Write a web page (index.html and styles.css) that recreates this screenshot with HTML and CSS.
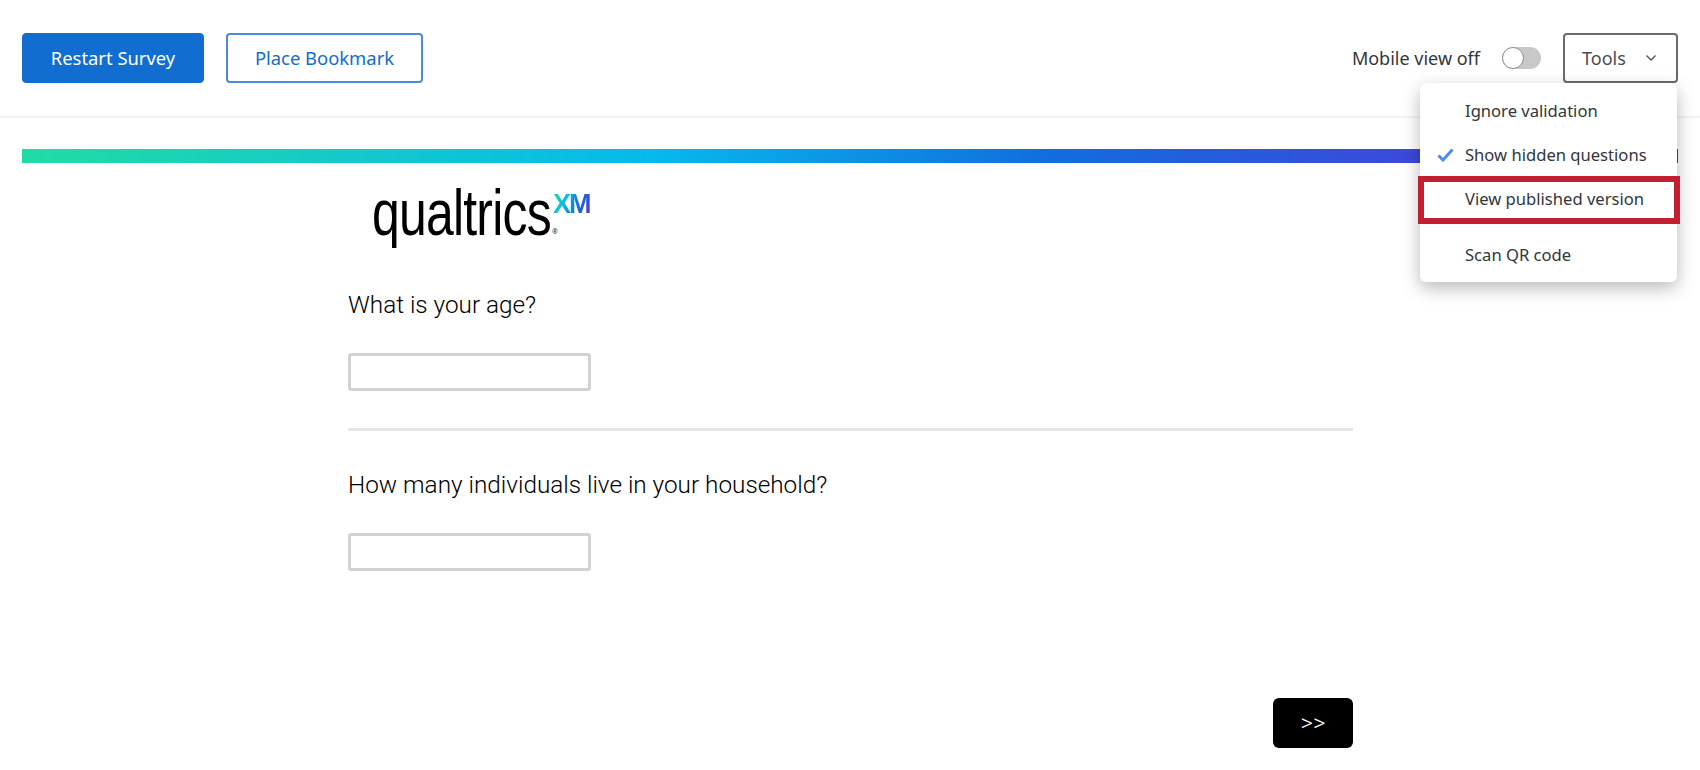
FILE: index.html
```html
<!DOCTYPE html>
<html lang="en">
<head>
<meta charset="utf-8">
<title>Survey preview</title>
<link rel="stylesheet" href="styles.css">
</head>
<body>
<header class="toolbar">
  <div class="toolbar-left">
    <button class="btn btn-primary">Restart Survey</button>
    <button class="btn btn-outline">Place Bookmark</button>
  </div>
  <div class="toolbar-right">
    <span class="mobile-label">Mobile view off</span>
    <span class="toggle"><span class="knob"></span></span>
    <div class="tools">
      <button class="tools-btn">Tools
        <svg class="chev" width="12" height="8" viewBox="0 0 12 8"><path d="M1.5 1.5 6 6l4.5-4.5" fill="none" stroke="#525252" stroke-width="1.3"/></svg>
      </button>
      <div class="menu">
        <div class="menu-item">Ignore validation</div>
        <div class="menu-item"><svg class="check" width="17" height="14" viewBox="0 0 17 14"><path d="M1.5 7.5 6 12 15.5 1.5" fill="none" stroke="#4a90e2" stroke-width="3"/></svg>Show hidden questions</div>
        <div class="menu-item">View published version</div>
        <div class="menu-sep"></div>
        <div class="menu-item">Scan QR code</div>
        <div class="highlight"></div>
      </div>
    </div>
  </div>
</header>
<div class="bar"></div>
<main class="survey">
  <div class="logo"><span class="logo-word">qualtrics</span><span class="logo-reg">®</span><span class="logo-xm">XM</span></div>
  <section class="question">
    <p class="q-text">What is your age?</p>
    <input class="q-input" type="text" aria-label="What is your age?">
  </section>
  <div class="divider"></div>
  <section class="question question-second">
    <p class="q-text">How many individuals live in your household?</p>
    <input class="q-input" type="text" aria-label="How many individuals live in your household?">
  </section>
  <div class="actions"><button class="next">&gt;&gt;</button></div>
</main>
</body>
</html>
```
FILE: styles.css
```css
* { box-sizing: border-box; }
html, body { margin: 0; height: 770px; overflow: hidden; background: #fff; }
body { font-family: "Noto Sans", "Open Sans", sans-serif; color: #32363a; }
button { font-family: inherit; cursor: pointer; }

.toolbar {
  display: flex; justify-content: space-between; align-items: flex-start;
  height: 118px; padding: 33px 22px 0;
  border-bottom: 2px solid #f3f3f3;
}
.toolbar-left { display: flex; gap: 22px; }
.btn { height: 50px; border-radius: 4px; font-size: 18.4px; padding: 0 0 2px; }
.btn-primary { width: 182px; background: #116dcf; border: 1px solid #116dcf; color: #fff; }
.btn-outline { width: 197px; background: #fff; border: 2px solid #4a8cdc; color: #116dcf; }

.toolbar-right { display: flex; align-items: center; }
.mobile-label { font-size: 18px; margin-right: 22px; }
.toggle { width: 39px; height: 22px; border-radius: 11px; background: #c8c8c8; margin-right: 22px; display: flex; }
.knob { width: 22px; height: 22px; border-radius: 50%; background: #fff; border: 1px solid #8f8f8f; }
.tools { position: relative; }
.tools-btn {
  width: 115px; height: 50px; display: flex; align-items: center; justify-content: space-between;
  padding: 0 19px 0 17px; background: #fff; border: 2px solid #6b6b6b; border-radius: 4px;
  font-size: 18px; color: #4a4d50;
}
.menu {
  position: absolute; top: 50px; right: 1px; width: 257px; height: 199px; z-index: 2;
  padding-top: 6px; background: #fff; border-radius: 6px;
  box-shadow: 0 6px 18px rgba(0,0,0,.28);
}
.menu-item { position: relative; height: 44px; line-height: 43px; padding-left: 45px; font-size: 16.6px; color: #32363a; white-space: nowrap; }
.check { position: absolute; left: 17px; top: 15px; }
.menu-sep { height: 1px; background: #e6e6e6; margin: 1px 0 10px; }
.highlight { position: absolute; left: -2px; right: -3px; top: 93px; height: 48px; border: 6px solid #c02030; }

.bar {
  height: 14px; margin: 31px 22px 0;
  background: linear-gradient(90deg, #21dba4 0%, #07b9ec 38%, #116dde 62%, #5b2fd8 100%);
}
.survey { width: 1005px; margin-left: 348px; }
.logo { position: relative; height: 127px; }
.logo-word {
  position: absolute; left: 24px; top: 14px; font-family: "Liberation Sans", sans-serif;
  font-size: 64px; line-height: 72px; color: #000; letter-spacing: -1px; white-space: nowrap;
  transform: scaleX(.78); transform-origin: left center;
}
.logo-reg { position: absolute; left: 204px; top: 64px; font-size: 7px; color: #222; }
.logo-xm {
  position: absolute; left: 205px; top: 27px; font-family: "Liberation Sans", sans-serif; font-weight: 700;
  font-size: 27px; line-height: 28px; letter-spacing: -2px;
  background: linear-gradient(110deg, #21dba4 5%, #07b9ec 35%, #116dde 65%, #5b2fd8);
  -webkit-background-clip: text; background-clip: text; color: transparent;
}
.q-text { margin: 0; font-family: Roboto, sans-serif; font-weight: 300; font-size: 24.3px; line-height: 30px; color: #000; }
.q-input { display: block; width: 243px; height: 38px; margin-top: 33px; border: 3px solid #d2d2d2; border-radius: 3px; background: #fff; }
.divider { height: 3px; background: #e6e6e6; margin-top: 37px; }
.question-second { margin-top: 39px; }
.actions { display: flex; justify-content: flex-end; margin-top: 127px; }
.next { width: 80px; height: 50px; background: #000; color: #fff; border: 0; border-radius: 6px; font-size: 24px; font-family: Roboto, sans-serif; font-weight: 300; }
```
